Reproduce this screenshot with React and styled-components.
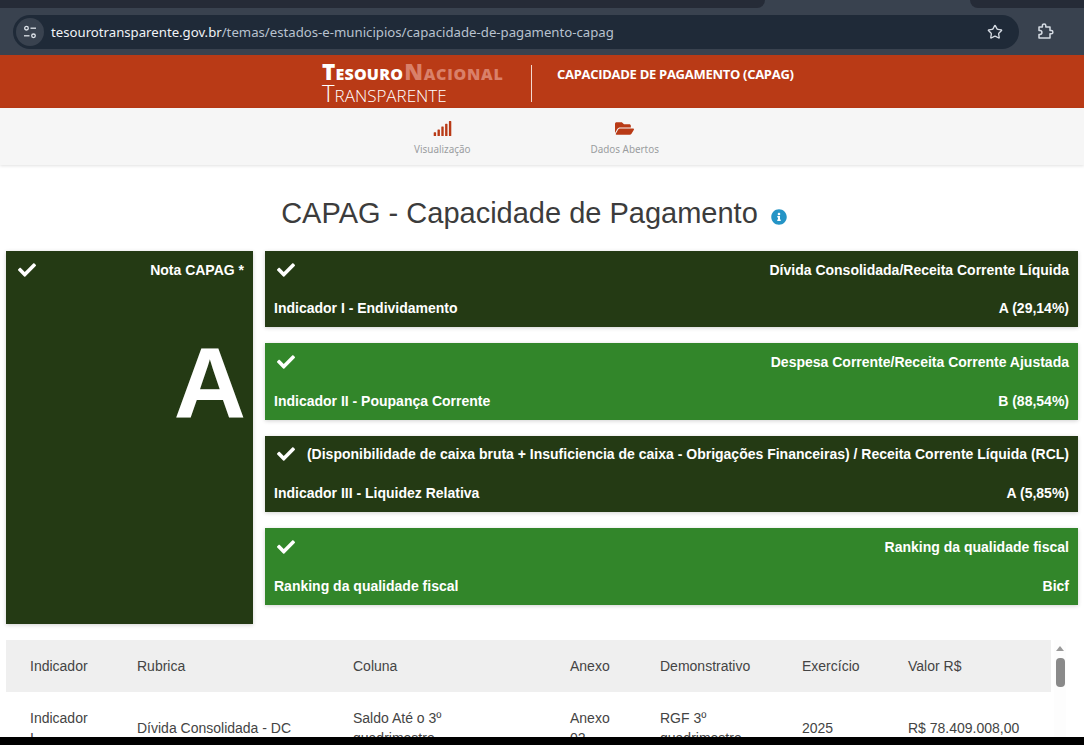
import React from 'react'
import styled, { createGlobalStyle } from 'styled-components'
import { FaCheck, FaFolderOpen, FaInfoCircle, FaSignal } from 'react-icons/fa'
import { Star } from 'lucide-react'

const GlobalStyle = createGlobalStyle`
  html, body {
    margin: 0;
    padding: 0;
    height: 745px;
    overflow: hidden;
    background: #fff;
    font-family: "Liberation Sans", Arial, sans-serif;
  }
`

const Page = styled.div`
  position: relative;
  width: 1084px;
  height: 745px;
  overflow: hidden;
  display: flex;
  flex-direction: column;
`

const TabStrip = styled.div`
  height: 8px;
  flex: none;
  background: #39424f;
  display: flex;
  justify-content: space-between;
`

const InactiveTabs = styled.div`
  width: ${p => p.$width}px;
  background: #252b37;
  border-radius: ${p => (p.$right ? '0 0 0 8px' : '0 0 8px 0')};
`

const Toolbar = styled.div`
  height: 47px;
  flex: none;
  box-sizing: border-box;
  background: #39424f;
  display: flex;
  align-items: center;
  padding: 0 19px 0 13px;
`

const AddressBar = styled.div`
  width: 1006px;
  height: 34px;
  box-sizing: border-box;
  border-radius: 17px;
  background: #1f2a38;
  display: flex;
  align-items: center;
  padding: 0 16px 0 3px;
  color: #e6eaf0;
  font-family: "Noto Sans", sans-serif;
  font-size: 13.2px;
`

const SiteButton = styled.span`
  width: 28px;
  height: 28px;
  margin-right: 7px;
  border-radius: 50%;
  background: #39424f;
  display: flex;
  align-items: center;
  justify-content: center;
`

const Url = styled.span`
  flex: 1;
  color: #b8c2cf;
  white-space: nowrap;
  b {
    color: #f0f3f7;
    font-weight: 400;
  }
`

const Extension = styled.svg`
  margin-left: 17px;
  flex: none;
`

const Header = styled.header`
  height: 53px;
  flex: none;
  background: #b93a16;
  display: flex;
  color: #fff;
  font-family: "Open Sans", sans-serif;
  padding-left: 322px;
  box-sizing: border-box;
`

const Logo = styled.div`
  width: 209px;
  padding-top: 6px;
  box-sizing: border-box;
`

const LogoTop = styled.div`
  font-weight: 800;
  font-size: 22.5px;
  line-height: 22px;
  height: 22px;
  font-variant: small-caps;
  white-space: nowrap;
  letter-spacing: 0.2px;
  span {
    margin-left: 1px;
    font-weight: 800;
    color: #d9806a;
    letter-spacing: 0.75px;
  }
`

const LogoBottom = styled.div`
  font-weight: 300;
  font-size: 24px;
  line-height: 20px;
  height: 20px;
  font-variant: small-caps;
  white-space: nowrap;
`

const HeaderTitle = styled.div`
  margin-top: 10px;
  height: 37px;
  padding: 0 0 0 25px;
  box-sizing: border-box;
  border-left: 1px solid #f3d9d0;
  font-size: 13px;
  font-weight: 700;
  letter-spacing: -0.29px;
  white-space: nowrap;
`

const Nav = styled.nav`
  height: 57px;
  flex: none;
  box-sizing: border-box;
  padding: 11px 11px 0 0;
  background: #f6f6f6;
  box-shadow: 0 1px 3px rgba(0, 0, 0, 0.12);
  display: flex;
  justify-content: center;
  gap: 120px;
`

const NavItem = styled.a`
  display: flex;
  flex-direction: column;
  align-items: center;
  color: #b93a16;
  font-family: "Noto Sans", sans-serif;
  span {
    margin-top: 5px;
    font-size: 9.9px;
    line-height: 12px;
    color: #9a9d9f;
  }
`

const Title = styled.h1`
  margin: 31px 0 0;
  height: 34px;
  flex: none;
  display: flex;
  align-items: center;
  justify-content: center;
  gap: 13px;
  padding-right: 16px;
  font-size: 29px;
  font-weight: 400;
  line-height: 34px;
  color: #3c3c3c;
  svg {
    color: #2494c6;
    margin-top: 8px;
  }
`

const Cards = styled.section`
  margin: 21px 6px 0;
  display: grid;
  grid-template-columns: 247px 813px;
  gap: 12px;
  height: 373px;
  flex: none;
`

const Card = styled.div`
  background: ${p => (p.$light ? '#32862a' : '#243a14')};
  box-shadow: 0 1px 4px rgba(0, 0, 0, 0.18);
  color: #fff;
  font-size: 14px;
  font-weight: 700;
  box-sizing: border-box;
`

const ScoreCard = styled(Card)`
  padding: 11px 9px 0 12px;
  svg {
    margin-top: -1px;
  }
`

const CardRow = styled.div`
  display: flex;
  justify-content: space-between;
  align-items: flex-start;
  white-space: nowrap;
`

const Grade = styled.div`
  margin: 49px -2px 0 0;
  text-align: right;
  font-size: 100px;
  line-height: 110px;
`

const IndicatorList = styled.div`
  display: flex;
  flex-direction: column;
  gap: 16px;
`

const IndicatorCard = styled(Card)`
  height: 76.4px;
  padding: 10.5px 9px 11px 9px;
  display: flex;
  flex-direction: column;
  justify-content: space-between;
`

const CheckSlot = styled.span`
  display: flex;
  margin-top: -1px;
  padding: 0 0 0 3px;
  svg {
    font-size: 18px;
  }
`

const TableArea = styled.div`
  margin: 16px 0 0 6px;
  display: flex;
  flex: 1;
  min-height: 0;
`

const Table = styled.table`
  width: 1045px;
  height: 0;
  table-layout: fixed;
  border-collapse: collapse;
  font-size: 14px;
  color: #444;
  th {
    height: 52px;
    padding: 0 0 0 24px;
    background: #efefef;
    font-weight: 400;
    text-align: left;
  }
  td {
    padding: 16px 24px 16px;
    line-height: 20px;
    vertical-align: middle;
  }
`

const ScrollTrack = styled.div`
  width: 12px;
  margin-left: 3px;
  display: flex;
  flex-direction: column;
  align-items: center;
  background: #fdfdfd;
`

const ScrollArrow = styled.span`
  margin-top: 6px;
  border-left: 4px solid transparent;
  border-right: 4px solid transparent;
  border-bottom: 5px solid #9a9a9a;
`

const ScrollThumb = styled.span`
  margin-top: 7px;
  width: 9px;
  height: 29px;
  border-radius: 4px;
  background: #8a8a8a;
`

const BottomEdge = styled.div`
  position: absolute;
  left: 0;
  right: 0;
  bottom: 0;
  height: 8px;
  background: #000;
`

const indicators = [
  { name: 'Dívida Consolidada/Receita Corrente Líquida', label: 'Indicador I - Endividamento', value: 'A (29,14%)' },
  { name: 'Despesa Corrente/Receita Corrente Ajustada', label: 'Indicador II - Poupança Corrente', value: 'B (88,54%)', light: true },
  { name: '(Disponibilidade de caixa bruta + Insuficiencia de caixa - Obrigações Financeiras) / Receita Corrente Líquida (RCL)', label: 'Indicador III - Liquidez Relativa', value: 'A (5,85%)' },
  { name: 'Ranking da qualidade fiscal', label: 'Ranking da qualidade fiscal', value: 'Bicf', light: true },
]

const columns = [
  ['Indicador', 107],
  ['Rubrica', 216],
  ['Coluna', 217],
  ['Anexo', 90],
  ['Demonstrativo', 142],
  ['Exercício', 106],
  ['Valor R$', 167],
]

const TuneIcon = () => (
  <svg width="14" height="14" viewBox="0 0 14 14" fill="none" stroke="#dfe4ea" strokeWidth="1.3">
    <circle cx="3.5" cy="3.2" r="1.8" />
    <path d="M7.5 3.2h5.5" />
    <circle cx="10.5" cy="10.8" r="1.8" />
    <path d="M1 10.8h5.5" />
  </svg>
)

const ExtensionIcon = () => (
  <Extension width="19" height="19" viewBox="0 0 19 19" fill="none" stroke="#d5dbe3" strokeWidth="1.5" strokeLinejoin="round">
    <path d="M3 5h3.4V3.6a1.7 1.7 0 0 1 3.4 0V5h4.2v3.6h1.3a1.6 1.6 0 0 1 0 3.2H14V16H3v-3.6h1a1.9 1.9 0 0 0 0-3.8H3z" />
  </Extension>
)

export default function App() {
  return (
    <Page>
      <GlobalStyle />
      <TabStrip>
        <InactiveTabs $width={765} />
        <InactiveTabs $width={114} $right />
      </TabStrip>
      <Toolbar>
        <AddressBar>
          <SiteButton>
            <TuneIcon />
          </SiteButton>
          <Url>
            <b>tesourotransparente.gov.br</b>/temas/estados-e-municipios/capacidade-de-pagamento-capag
          </Url>
          <Star size={16} color="#d5dbe3" strokeWidth={2} />
        </AddressBar>
        <ExtensionIcon />
      </Toolbar>
      <Header>
        <Logo>
          <LogoTop>
            Tesouro<span>Nacional</span>
          </LogoTop>
          <LogoBottom>Transparente</LogoBottom>
        </Logo>
        <HeaderTitle>CAPACIDADE DE PAGAMENTO (CAPAG)</HeaderTitle>
      </Header>
      <Nav>
        <NavItem>
          <FaSignal size={19} />
          <span>Visualização</span>
        </NavItem>
        <NavItem>
          <FaFolderOpen size={19} />
          <span>Dados Abertos</span>
        </NavItem>
      </Nav>
      <Title>
        CAPAG - Capacidade de Pagamento
        <FaInfoCircle size={16} />
      </Title>
      <Cards>
        <ScoreCard>
          <CardRow>
            <FaCheck size={18} />
            <span>Nota CAPAG *</span>
          </CardRow>
          <Grade>A</Grade>
        </ScoreCard>
        <IndicatorList>
          {indicators.map(item => (
            <IndicatorCard key={item.label} $light={item.light}>
              <CardRow>
                <CheckSlot>
                  <FaCheck />
                </CheckSlot>
                <span>{item.name}</span>
              </CardRow>
              <CardRow>
                <span>{item.label}</span>
                <span>{item.value}</span>
              </CardRow>
            </IndicatorCard>
          ))}
        </IndicatorList>
      </Cards>
      <TableArea>
        <Table>
          <colgroup>
            {columns.map(([name, width]) => (
              <col key={name} width={width} />
            ))}
          </colgroup>
          <thead>
            <tr>
              {columns.map(([name]) => (
                <th key={name}>{name}</th>
              ))}
            </tr>
          </thead>
          <tbody>
            <tr>
              <td>Indicador I</td>
              <td>Dívida Consolidada - DC</td>
              <td>Saldo Até o 3º quadrimestre</td>
              <td>Anexo 02</td>
              <td>RGF 3º quadrimestre</td>
              <td>2025</td>
              <td>R$ 78.409.008,00</td>
            </tr>
          </tbody>
        </Table>
        <ScrollTrack>
          <ScrollArrow />
          <ScrollThumb />
        </ScrollTrack>
      </TableArea>
      <BottomEdge />
    </Page>
  )
}
